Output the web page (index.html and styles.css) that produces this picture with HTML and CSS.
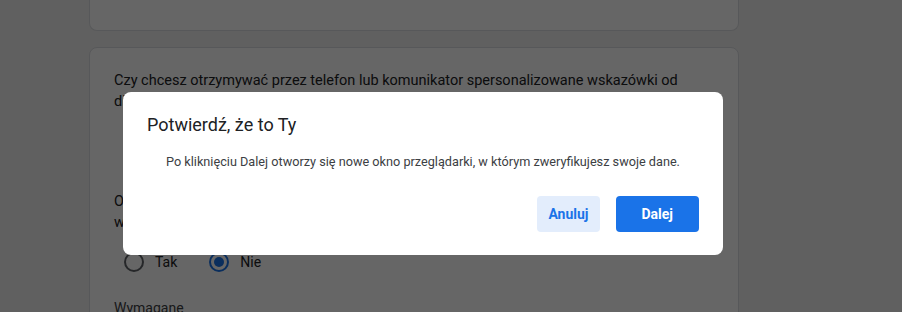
FILE: index.html
```html
<!DOCTYPE html>
<html lang="pl">
<head>
    <meta charset="UTF-8">
    <meta name="viewport" content="width=device-width, initial-scale=1.0">
    <title>Formularz</title>
    <link rel="stylesheet" href="styles.css">
</head>
<body>
    <div class="page">
        <div class="card card-top"></div>
        <div class="card">
            <div class="question">
                <p class="question-text">Czy chcesz otrzymywać przez telefon lub komunikator spersonalizowane wskazówki od dietetyka?</p>
                <div class="options">
                    <label class="option"><span class="radio"></span>Tak</label>
                    <label class="option"><span class="radio"></span>Nie</label>
                </div>
            </div>
            <div class="question">
                <p class="question-text">Oświadczam, że zapoznałem się z regulaminem i wyrażam zgodę<br>w celu otrzymywania wskazówek</p>
                <div class="options">
                    <label class="option"><span class="radio"></span>Tak</label>
                    <label class="option"><span class="radio radio-checked"></span>Nie</label>
                </div>
            </div>
            <div class="required">Wymagane</div>
        </div>
    </div>

    <div class="overlay"></div>
    <div class="dialog">
        <h2 class="dialog-title">Potwierdź, że to Ty</h2>
        <p class="dialog-text">Po kliknięciu Dalej otworzy się nowe okno przeglądarki, w którym zweryfikujesz swoje dane.</p>
        <div class="dialog-actions">
            <button class="btn btn-secondary">Anuluj</button>
            <button class="btn btn-primary">Dalej</button>
        </div>
    </div>
</body>
</html>
```

FILE: styles.css
```css
body {
    margin: 0;
    background-color: #f0f0f0;
    font-family: Roboto, "Liberation Sans", Arial, sans-serif;
    color: #202124;
    overflow: hidden;
}
.page {
    width: 650px;
    margin-left: 89px;
    display: flex;
    flex-direction: column;
    gap: 16px;
}
.card {
    background-color: #fff;
    border: 1px solid #dadce0;
    border-radius: 8px;
    box-sizing: border-box;
    padding: 22px 24px 0;
}
.card-top {
    height: 31px;
    border-top: 0;
    border-radius: 0 0 8px 8px;
}
.question-text {
    margin: 0;
    font-size: 14.5px;
    line-height: 21px;
}
.question {
    margin-bottom: 40px;
}
.question + .question {
    margin-bottom: 0;
}
.options {
    display: flex;
    gap: 32px;
    margin-top: 19px;
    padding-left: 10px;
}
.option {
    display: flex;
    align-items: center;
    gap: 11px;
    font-size: 14px;
    height: 20px;
}
.radio {
    width: 20px;
    height: 20px;
    border: 2px solid #5f6368;
    border-radius: 50%;
    box-sizing: border-box;
    position: relative;
}
.radio-checked {
    border-color: #1a73e8;
}
.radio-checked::after {
    content: "";
    position: absolute;
    left: 3px;
    top: 3px;
    width: 10px;
    height: 10px;
    border-radius: 50%;
    background-color: #1a73e8;
}
.required {
    margin-top: 28px;
    font-size: 14px;
    color: #3c4043;
    height: 40px;
}
.overlay {
    position: fixed;
    inset: 0;
    background-color: rgba(0, 0, 0, 0.6);
}
.dialog {
    position: fixed;
    left: 123px;
    top: 92px;
    width: 600px;
    height: 163px;
    box-sizing: border-box;
    background-color: #fff;
    border-radius: 8px;
    padding: 21px 24px 23px;
}
.dialog-title {
    margin: 0;
    font-size: 18px;
    font-weight: 400;
    line-height: 24px;
    color: #202124;
}
.dialog-text {
    margin: 16px 0 0;
    font-size: 12.7px;
    line-height: 18px;
    color: #3c4043;
    text-align: center;
}
.dialog-actions {
    display: flex;
    justify-content: flex-end;
    gap: 16px;
    margin-top: 25px;
}
.btn {
    height: 36px;
    border: none;
    border-radius: 4px;
    font-family: Roboto, "Liberation Sans", Arial, sans-serif;
    font-size: 14px;
    font-weight: 700;
    cursor: pointer;
}
.btn-secondary {
    background-color: #e3edfc;
    color: #1a73e8;
    padding: 0 11px;
}
.btn-primary {
    background-color: #1a73e8;
    color: #fff;
    padding: 0 26px;
}
```
